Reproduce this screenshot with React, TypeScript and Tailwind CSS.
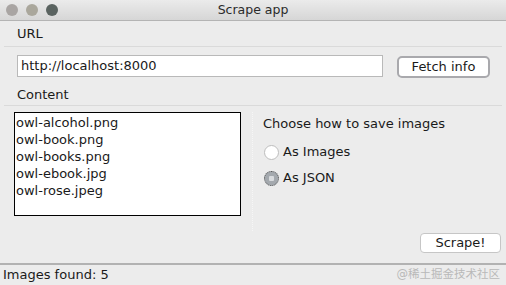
import React from "react";

const files = ["owl-alcohol.png", "owl-book.png", "owl-books.png", "owl-ebook.jpg", "owl-rose.jpeg"];

const font = { fontFamily: '"DejaVu Sans", "Noto Sans CJK SC", sans-serif' };

export default function App() {
  return (
    <div className="flex h-[285px] w-[506px] flex-col overflow-hidden bg-[#ececec] text-[13px] text-[#1a1a1a]" style={font}>
      {/* title bar */}
      <div className="relative flex h-[21px] shrink-0 items-center border-b border-[#b4b4b4] bg-gradient-to-b from-[#ebebeb] to-[#d6d6d6]">
        <div className="flex gap-[8px] pl-[6px]">
          <span className="h-[12px] w-[12px] rounded-full bg-[#a9a5a3]" />
          <span className="h-[12px] w-[12px] rounded-full bg-[#aaa79c]" />
          <span className="h-[12px] w-[12px] rounded-full bg-[#5a6360]" />
        </div>
        <div className="absolute inset-0 flex items-center justify-center text-[12.5px] text-[#2a2a2a]">Scrape app</div>
      </div>

      <div className="flex h-[25px] shrink-0 items-center pl-[17px]">URL</div>
      <div className="mx-[4px] h-px shrink-0 bg-[#dadada]" />

      <div className="flex h-[37px] shrink-0 items-start pt-[8px]">
        <div className="ml-[17px] flex h-[22px] w-[366px] items-center border border-[#b9b9b9] bg-white pl-[3px]">
          http://localhost:8000
        </div>
        <button className="ml-[14px] mt-px flex h-[22px] w-[93px] items-center justify-center rounded-[5px] border-2 border-[#a9a9ad] bg-white">
          Fetch info
        </button>
      </div>

      <div className="flex h-[21px] shrink-0 items-center pl-[17px]">Content</div>
      <div className="mx-[4px] h-px shrink-0 bg-[#dadada]" />

      <div className="flex h-[125px] shrink-0 pt-[6px]">
        <div className="ml-[14px] h-[104px] w-[227px] border border-black bg-white pl-px pt-px leading-[17px]">
          {files.map((f) => (
            <div key={f}>{f}</div>
          ))}
        </div>
        <div className="ml-[11px] flex flex-1 flex-col border-l border-dotted border-[#f6f6f6] pl-[10px]">
          <div className="mt-[3px] leading-[18px]">Choose how to save images</div>
          <div className="mt-[10px] flex items-center gap-[4px] leading-[18px]">
            <span className="ml-px h-[15px] w-[15px] rounded-full border border-[#bdbdbd] bg-white" />
            <span>As Images</span>
          </div>
          <div className="mt-[8px] flex items-center gap-[4px] leading-[18px]">
            <span className="ml-px flex h-[15px] w-[15px] items-center justify-center rounded-full border border-dotted border-[#555] bg-[#a4a9ae]">
              <span className="h-[5px] w-[5px] rounded-[1px] bg-[#d8dbde]" />
            </span>
            <span>As JSON</span>
          </div>
        </div>
      </div>

      <div className="flex flex-1 items-start justify-end pr-[5px] pt-[2px]">
        <button className="flex h-[20px] w-[81px] items-center justify-center rounded-[4px] border border-[#c6c6c6] bg-white">
          Scrape!
        </button>
      </div>

      <div className="h-[2px] shrink-0 bg-[#b2b2b2]" />
      <div className="flex h-[20px] shrink-0 items-center justify-between pl-[3px] pr-[6px]">
        <span>Images found: 5</span>
        <span className="text-[11.5px] text-[#b9b9b9]">@稀土掘金技术社区</span>
      </div>
    </div>
  );
}
